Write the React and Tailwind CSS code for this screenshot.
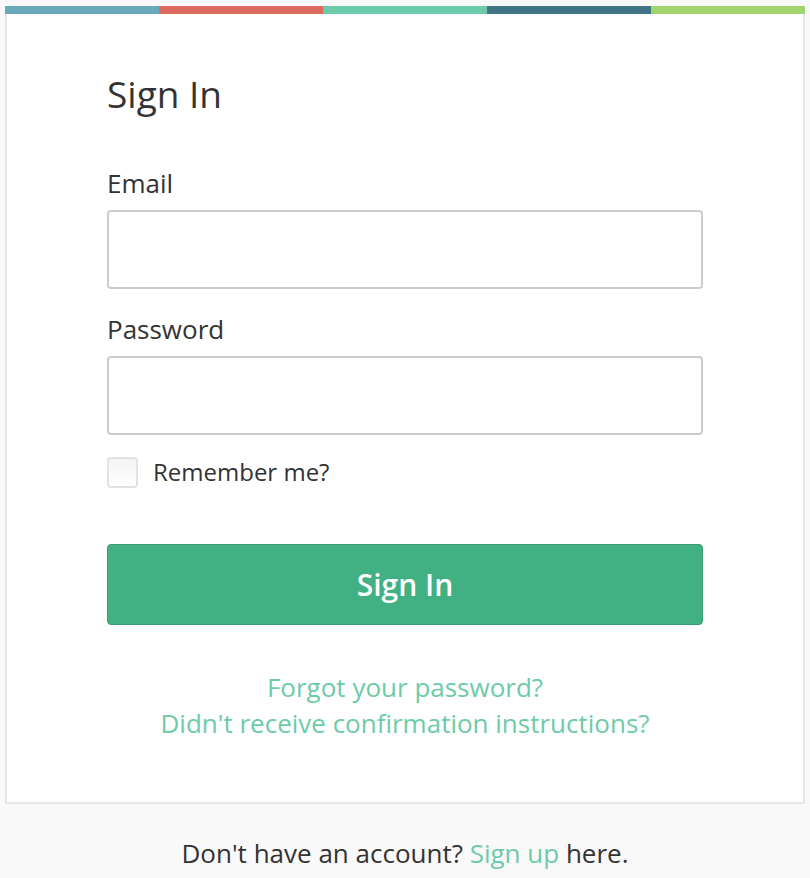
export default function App() {
  return (
    <div
      className="min-h-screen bg-[#f9f9f9] pt-[6px] px-[5px] text-[#333333]"
      style={{ fontFamily: '"Open Sans", "Noto Sans", sans-serif' }}
    >
      <div className="flex h-[8px] w-[800px]">
        <div className="w-[154px] bg-[#6aa8bc]" />
        <div className="w-[164px] bg-[#dc6a5f]" />
        <div className="w-[164px] bg-[#6ccba8]" />
        <div className="w-[164px] bg-[#417485]" />
        <div className="w-[154px] bg-[#a1d36f]" />
      </div>
      <div className="w-[800px] bg-white border-x-2 border-b-2 border-[#e6e6e6] px-[100px] pt-[58px] pb-[61px]">
        <h1 className="text-[37px] leading-[44px] font-normal">Sign In</h1>
        <label className="block mt-[50px] text-[26px] leading-[34px]">Email</label>
        <input
          type="email"
          className="block mt-[10px] w-[596px] h-[79px] border-2 border-[#cccccc] rounded-[4px] bg-white outline-none"
        />
        <label className="block mt-[23px] text-[26px] leading-[34px]">Password</label>
        <input
          type="password"
          className="block mt-[10px] w-[596px] h-[79px] border-2 border-[#cccccc] rounded-[4px] bg-white outline-none"
        />
        <div className="mt-[20px] flex items-center gap-[15px]">
          <div className="w-[31px] h-[31px] rounded-[4px] border-2 border-[#e2e2e2] bg-gradient-to-b from-[#f4f4f4] to-[#ffffff]" />
          <span className="text-[24px] leading-[34px]">Remember me?</span>
        </div>
        <button className="mt-[55px] w-[596px] h-[81px] rounded-[4px] border border-[#3a9c75] bg-[#41b083] text-white text-[30px] font-semibold leading-[40px]">
          Sign In
        </button>
        <div className="mt-[44px] text-center text-[26px] leading-[36px] text-[#6dcba8]">
          <div>Forgot your password?</div>
          <div>Didn't receive confirmation instructions?</div>
        </div>
      </div>
      <div className="w-[800px] mt-[32px] text-center text-[26px] leading-[34px]">
        Don't have an account? <span className="text-[#6dcba8]">Sign up</span> here.
      </div>
    </div>
  );
}
